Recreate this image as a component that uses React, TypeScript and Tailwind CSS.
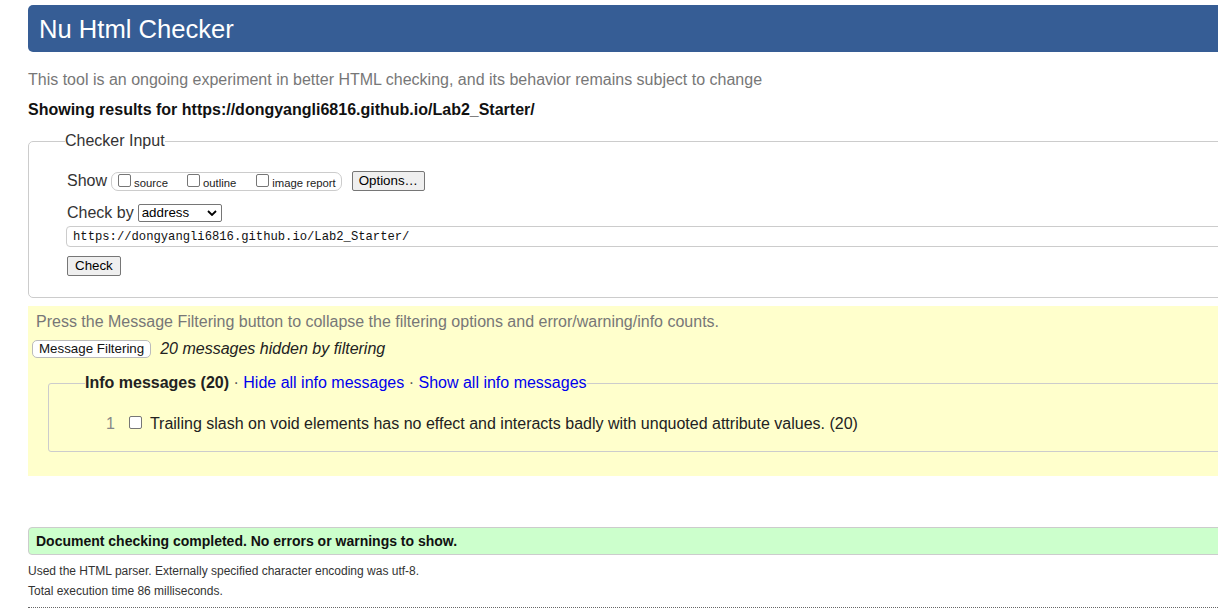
import React from "react";

function Box({ className = "" }: { className?: string }) {
  return (
    <span
      className={
        "inline-block w-[13px] h-[13px] border border-[#767676] rounded-[2px] bg-white shrink-0 " +
        className
      }
    />
  );
}

export default function App() {
  return (
    <div className="w-[1218px] h-[615px] overflow-hidden bg-white text-[#222] font-['Liberation_Sans',Arial,sans-serif]">
      <div className="w-[1260px] pl-[28px]">
        {/* Header */}
        <div className="mt-[5px] h-[47px] bg-[#365d95] rounded-[5px] flex items-center pl-[11px]">
          <h1 className="text-white text-[25.6px] leading-[30px] font-normal">Nu Html Checker</h1>
        </div>

        <p className="mt-[18px] text-[16px] leading-[20px] text-[#777]">
          This tool is an ongoing experiment in better HTML checking, and its behavior remains subject to change
        </p>
        <p className="mt-[10px] text-[16px] leading-[20px] font-bold text-[#111]">
          Showing results for https://dongyangli6816.github.io/Lab2_Starter/
        </p>

        {/* Checker Input */}
        <fieldset className="mt-[11px] border border-[#ccc] rounded-[5px] pl-[38px] pb-[20px]">
          <legend className="-ml-[2px] text-[16px] leading-[20px] text-[#333]">Checker Input</legend>
          <div className="mt-[19px] h-[22px] flex items-center">
            <span className="text-[16px] leading-[20px] text-[#333]">Show</span>
            <div className="ml-[4px] h-[19px] border border-[#ccc] rounded-[7px] flex items-start pl-[6px] pr-[5px] pt-[1px]">
              <Box />
              <span className="ml-[3px] text-[11.3px] leading-[15px] mt-[2px] text-[#222]">source</span>
              <Box className="ml-[19px]" />
              <span className="ml-[3px] text-[11.3px] leading-[15px] mt-[2px] text-[#222]">outline</span>
              <Box className="ml-[20px]" />
              <span className="ml-[3px] text-[11.3px] leading-[15px] mt-[2px] text-[#222]">image report</span>
            </div>
            <button className="ml-[10px] h-[20px] px-[6px] border border-[#767676] rounded-[2px] bg-[#efefef] text-[13.33px] leading-[16px] text-black">
              Options…
            </button>
          </div>

          <div className="mt-[10px] h-[22px] flex items-center">
            <span className="text-[16px] leading-[20px] text-[#333]">Check by</span>
            <div className="ml-[4px] w-[84px] h-[18px] border border-[#767676] rounded-[2px] bg-white flex items-center justify-between pl-[3px] pr-[4px] text-[13.33px] text-black">
              <span>address</span>
              <svg width="10" height="6" viewBox="0 0 10 6">
                <path d="M1 1 L5 5 L9 1" fill="none" stroke="#000" strokeWidth="1.8" />
              </svg>
            </div>
          </div>

          <div className="mt-[2px] -ml-[1px] h-[21px] border border-[#ccc] rounded-l-[4px] flex items-center pl-[6px] pt-[2px] font-['Liberation_Mono',monospace] text-[12.2px] text-[#111]">
            https://dongyangli6816.github.io/Lab2_Starter/
          </div>

          <button className="mt-[9px] h-[20px] px-[7px] border border-[#767676] rounded-[2px] bg-[#efefef] text-[13.33px] leading-[16px] text-black">
            Check
          </button>
        </fieldset>

        {/* Filtering */}
        <div className="mt-[8px] h-[170px] bg-[#ffffcc] pl-[8px] pt-[6px]">
          <p className="text-[16px] leading-[20px] text-[#777]">
            Press the Message Filtering button to collapse the filtering options and error/warning/info counts.
          </p>
          <div className="mt-[7px] h-[20px] flex items-center">
            <button className="-ml-[4px] h-[18px] px-[6px] border border-[#bbb] rounded-[5px] bg-white text-[13.33px] leading-[16px] text-[#111]">
              Message Filtering
            </button>
            <span className="ml-[9px] text-[16px] leading-[20px] italic text-[#222]">
              20 messages hidden by filtering
            </span>
          </div>

          <fieldset className="mt-[14px] ml-[12px] border border-[#ccc] rounded-[3px] pl-[36px] pb-[17px]">
            <legend className="text-[16px] leading-[20px]">
              <b className="text-[#222]">Info messages (20)</b>
              <span className="text-[#555]"> · </span>
              <span className="text-[#0000ee]">Hide all info messages</span>
              <span className="text-[#555]"> · </span>
              <span className="text-[#0000ee]">Show all info messages</span>
            </legend>
            <div className="mt-[21px] h-[20px] flex items-center">
              <span className="ml-[21px] text-[16px] leading-[20px] text-[#888]">1</span>
              <Box className="ml-[14px] -mt-[3px]" />
              <span className="ml-[8px] text-[16px] leading-[20px] text-[#222]">
                Trailing slash on void elements has no effect and interacts badly with unquoted attribute values. (20)
              </span>
            </div>
          </fieldset>
        </div>

        {/* Result */}
        <div className="mt-[51px] h-[28px] bg-[#ccffcc] border border-[#ccc] rounded-[4px] flex items-center pl-[7px] pt-[1px]">
          <span className="text-[14px] font-bold text-[#111]">
            Document checking completed. No errors or warnings to show.
          </span>
        </div>
        <p className="mt-[6px] text-[12px] leading-[20px] text-[#333]">
          Used the HTML parser. Externally specified character encoding was utf-8.
        </p>
        <p className="text-[12px] leading-[20px] text-[#333]">Total execution time 86 milliseconds.</p>
        <div className="mt-[6px] border-t border-dotted border-[#666]" />
      </div>
    </div>
  );
}
